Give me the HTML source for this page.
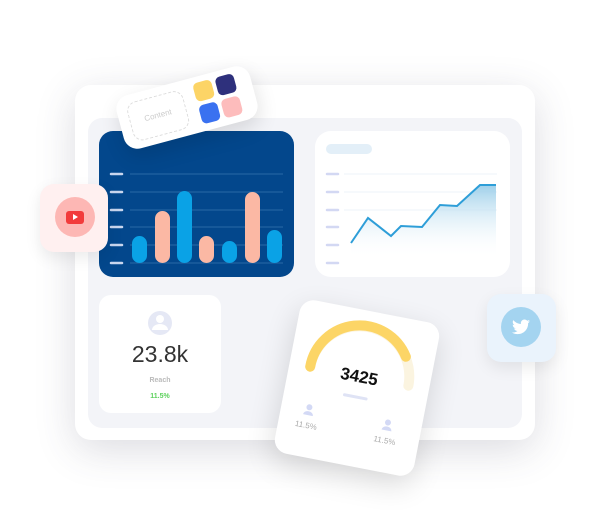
<!DOCTYPE html>
<html><head><style>
*{margin:0;padding:0;box-sizing:border-box}
body{width:600px;height:530px;background:#fff;position:relative;overflow:hidden;font-family:"Liberation Sans",sans-serif}
.abs{position:absolute}
</style></head><body>
<div class="abs" style="left:75px;top:85px;width:460px;height:355px;background:#fff;border-radius:16px;box-shadow:0 10px 40px rgba(60,60,90,0.18)"></div>
<div class="abs" style="left:88px;top:118px;width:434px;height:310px;background:#f3f4f8;border-radius:14px"></div>
<svg class="abs" style="left:0;top:0" width="600" height="530">
  <rect x="99" y="131" width="195" height="146" rx="14" fill="#03478c"/>
  <g stroke="#2a6aa6" stroke-width="1">
    <line x1="130" y1="174" x2="283" y2="174"/><line x1="130" y1="192" x2="283" y2="192"/>
    <line x1="130" y1="210" x2="283" y2="210"/><line x1="130" y1="227" x2="283" y2="227"/>
    <line x1="130" y1="245" x2="283" y2="245"/><line x1="130" y1="263" x2="283" y2="263"/>
  </g>
  <g stroke="#c9d6ee" stroke-width="2.5" stroke-linecap="round">
    <line x1="111" y1="174" x2="122" y2="174"/><line x1="111" y1="192" x2="122" y2="192"/>
    <line x1="111" y1="210" x2="122" y2="210"/><line x1="111" y1="227" x2="122" y2="227"/>
    <line x1="111" y1="245" x2="122" y2="245"/><line x1="111" y1="263" x2="122" y2="263"/>
  </g>
  <rect x="132" y="236" width="15" height="27" rx="7.5" fill="#0aa2e6"/>
  <rect x="155" y="211" width="15" height="52" rx="7.5" fill="#fbb8a4"/>
  <rect x="177" y="191" width="15" height="72" rx="7.5" fill="#0aa2e6"/>
  <rect x="199" y="236" width="15" height="27" rx="7.5" fill="#fbb8a4"/>
  <rect x="222" y="241" width="15" height="22" rx="7.5" fill="#0aa2e6"/>
  <rect x="245" y="192" width="15" height="71" rx="7.5" fill="#fbb8a4"/>
  <rect x="267" y="230" width="15" height="33" rx="7.5" fill="#0aa2e6"/>

  <rect x="315" y="131" width="195" height="146" rx="16" fill="#fff"/>
  <rect x="326" y="144" width="46" height="10" rx="5" fill="#e3eff8"/>
  <g stroke="#eef3f9" stroke-width="1"><line x1="344" y1="174" x2="497" y2="174"/><line x1="344" y1="192" x2="497" y2="192"/><line x1="344" y1="210" x2="497" y2="210"/></g>
  <g stroke="#d3d8f3" stroke-width="2.5" stroke-linecap="round">
    <line x1="327" y1="174" x2="338" y2="174"/><line x1="327" y1="192" x2="338" y2="192"/>
    <line x1="327" y1="210" x2="338" y2="210"/><line x1="327" y1="227" x2="338" y2="227"/>
    <line x1="327" y1="245" x2="338" y2="245"/><line x1="327" y1="263" x2="338" y2="263"/>
  </g>
  <defs><linearGradient id="g" x1="0" y1="0" x2="0" y2="1"><stop offset="0" stop-color="#9fd0ea"/><stop offset="1" stop-color="#fff" stop-opacity="0"/></linearGradient></defs>
  <path d="M351,243 L368,218 L391,236 L401,226 L422,227 L440,205 L457,206 L480,185 L496,185 L496,258 L351,258Z" fill="url(#g)"/>
  <path d="M351,243 L368,218 L391,236 L401,226 L422,227 L440,205 L457,206 L480,185 L496,185" fill="none" stroke="#2e9ed8" stroke-width="2"/>

  <rect x="99" y="295" width="122" height="118" rx="12" fill="#fff"/>
  <circle cx="160" cy="323" r="12" fill="#e5e8f5"/>
  <circle cx="160" cy="319" r="4" fill="#fff"/>
  <path d="M152,330 a8,6 0 0 1 16,0 z" fill="#fff"/>
  <text x="160" y="362" text-anchor="middle" font-size="23" fill="#333" font-family="Liberation Sans">23.8k</text>
  <text x="160" y="382" text-anchor="middle" font-size="7" fill="#bbb" font-weight="bold">Reach</text>
  <text x="160" y="398" text-anchor="middle" font-size="7" fill="#5ed15e" font-weight="bold">11.5%</text>
</svg>

<div class="abs" style="left:40px;top:184px;width:68px;height:68px;background:#fff0f0;border-radius:14px;box-shadow:0 6px 16px rgba(0,0,0,0.08)">
  <div class="abs" style="left:15px;top:13px;width:40px;height:40px;border-radius:50%;background:#fdb7b4"></div>
  <div class="abs" style="left:26px;top:27px;width:18px;height:13px;border-radius:3px;background:#f23b3b"></div>
  <div class="abs" style="left:33px;top:30px;width:0;height:0;border-left:5px solid #fff;border-top:3.5px solid transparent;border-bottom:3.5px solid transparent"></div>
</div>

<div class="abs" style="left:487px;top:294px;width:69px;height:68px;background:#eaf3fc;border-radius:14px;box-shadow:0 6px 16px rgba(0,0,0,0.08)">
  <div class="abs" style="left:14px;top:13px;width:40px;height:40px;border-radius:50%;background:#a4d4f0"></div>
  <svg class="abs" style="left:25px;top:25px" width="18" height="16" viewBox="0 0 24 20"><path fill="#fff" d="M24 2.4c-.9.4-1.8.7-2.8.8 1-.6 1.8-1.600 2.200-2.700-1 .6-2 1-3.100 1.200C19.400.7 18.100 0 16.700 0c-2.700 0-4.900 2.200-4.900 4.900 0 .4 0 .8.1 1.100C7.800 5.800 4.200 3.900 1.700.9c-.4.7-.7 1.600-.7 2.500 0 1.700.9 3.200 2.200 4.100-.8 0-1.600-.2-2.200-.6v.1c0 2.400 1.700 4.400 3.900 4.800-.4.1-.8.2-1.300.2-.3 0-.6 0-.9-.1.6 2 2.400 3.400 4.600 3.400-1.700 1.300-3.800 2.100-6.100 2.100-.4 0-.8 0-1.200-.1 2.200 1.400 4.800 2.200 7.500 2.200 9.100 0 14-7.500 14-14v-.6c1-.7 1.800-1.600 2.400-2.500z"/></svg>
</div>

<div class="abs" style="left:118px;top:80px;width:138px;height:55px;background:#fff;border-radius:14px;transform:rotate(-15deg);box-shadow:0 8px 20px rgba(0,0,0,0.12)">
  <div class="abs" style="left:10px;top:8px;width:58px;height:40px;border:1.5px dashed #ddd;border-radius:10px;font-size:8px;color:#ccc;text-align:center;line-height:37px">Content</div>
  <div class="abs" style="left:80px;top:6px;width:19px;height:19px;background:#fcd466;border-radius:5px"></div>
  <div class="abs" style="left:103px;top:6px;width:19px;height:19px;background:#2e307c;border-radius:5px"></div>
  <div class="abs" style="left:80px;top:29px;width:19px;height:19px;background:#3a71f0;border-radius:5px"></div>
  <div class="abs" style="left:103px;top:29px;width:19px;height:19px;background:#fdbcbc;border-radius:5px"></div>
</div>

<div class="abs" style="left:286px;top:310px;width:142px;height:156px;background:#fff;border-radius:14px;transform:rotate(11deg);box-shadow:0 10px 30px rgba(0,0,0,0.14)">
  <svg class="abs" style="left:0;top:0" width="142" height="156">
    <path d="M21,66 A50,50 0 0 1 121,66" fill="none" stroke="#fbf4e0" stroke-width="10" stroke-linecap="round"/>
    <path d="M21,66 A50,50 0 0 1 113,38" fill="none" stroke="#fcd566" stroke-width="10" stroke-linecap="round"/>
    <text x="71" y="72" text-anchor="middle" font-size="17" font-weight="bold" fill="#111" font-family="Liberation Sans">3425</text>
    <line x1="60" y1="87" x2="82" y2="87" stroke="#dfe3f5" stroke-width="3" stroke-linecap="round"/>
    <circle cx="28" cy="106" r="3" fill="#d3d9f5"/><path d="M23,114 a5,4 0 0 1 10,0z" fill="#d3d9f5"/>
    <text x="28" y="127" text-anchor="middle" font-size="8" fill="#aaa">11.5%</text>
    <circle cx="108" cy="106" r="3" fill="#d3d9f5"/><path d="M103,114 a5,4 0 0 1 10,0z" fill="#d3d9f5"/>
    <text x="108" y="127" text-anchor="middle" font-size="8" fill="#aaa">11.5%</text>
  </svg>
</div>
</body></html>
